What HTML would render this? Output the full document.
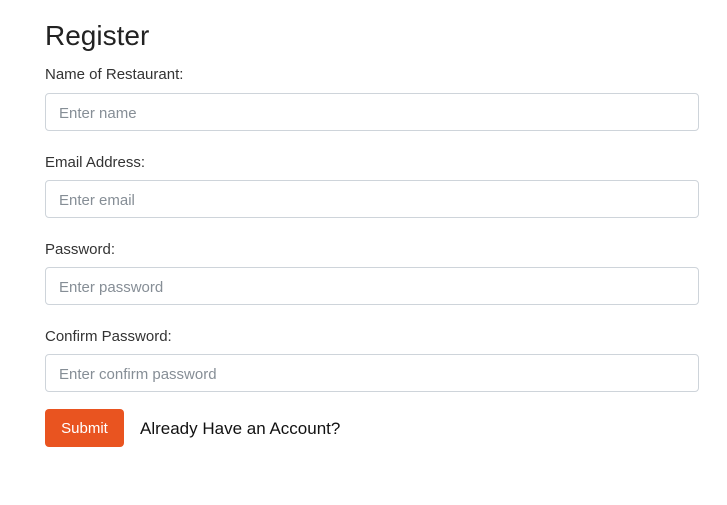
<!DOCTYPE html>
<html><head><meta charset="utf-8"><style>
body{margin:0;background:#fff;font-family:"Liberation Sans",sans-serif;color:#333;}
.h{position:absolute;left:45px;top:20px;font-size:28px;color:#222;}
.l{position:absolute;left:45px;font-size:15px;color:#333;}
.i{position:absolute;left:45px;width:652px;height:36px;border:1px solid #ced4da;border-radius:4px;box-sizing:content-box;}
.i span{position:absolute;left:13px;top:11px;font-size:15px;color:#868e96;}
.b{position:absolute;left:45px;top:409px;width:79px;height:38px;background:#e95420;border-radius:4px;color:#fff;font-size:15px;line-height:40px;text-align:center;}
.a{position:absolute;left:140px;top:419px;font-size:17px;color:#111;}
</style></head><body>
<div class="h">Register</div>
<div class="l" style="top:66px">Name of Restaurant:</div>
<div class="i" style="top:93px"><span>Enter name</span></div>
<div class="l" style="top:154px">Email Address:</div>
<div class="i" style="top:180px"><span>Enter email</span></div>
<div class="l" style="top:241px">Password:</div>
<div class="i" style="top:267px"><span>Enter password</span></div>
<div class="l" style="top:328px">Confirm Password:</div>
<div class="i" style="top:354px"><span>Enter confirm password</span></div>
<div class="b">Submit</div>
<div class="a">Already Have an Account?</div>
</body></html>
